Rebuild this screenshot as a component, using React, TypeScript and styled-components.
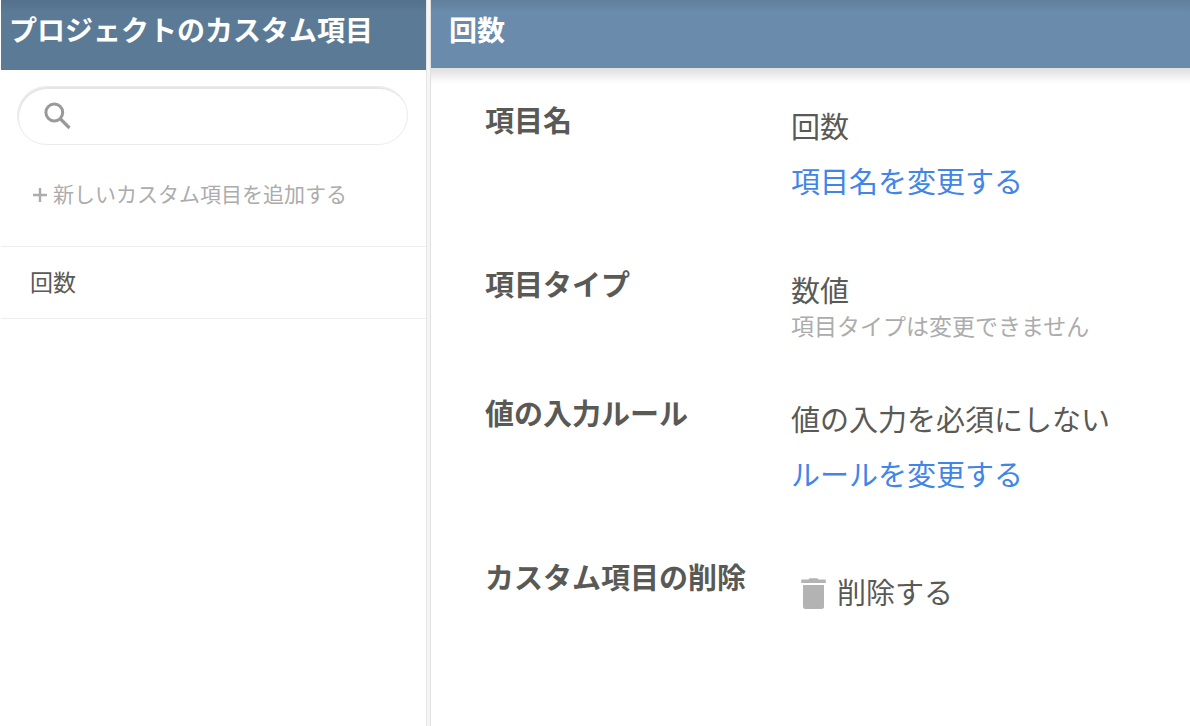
import React, { useState } from "react";
import styled, { createGlobalStyle } from "styled-components";

const GlobalStyle = createGlobalStyle`
  *, *::before, *::after { box-sizing: border-box; }
  body {
    margin: 0;
    background: #fff;
    color: #595955;
    font-family: "Noto Sans CJK JP", "Liberation Sans", sans-serif;
    font-size: 29px;
    line-height: 36px;
  }
  button, input { font: inherit; color: inherit; }
`;

const Page = styled.div`
  display: flex;
  min-height: 100vh;
  padding-left: 1px;
`;

const Sidebar = styled.aside`
  flex: none;
  width: clamp(280px, 36vw, 425px);
`;

const Divider = styled.div`
  flex: none;
  width: 5px;
  background: #f5f5f5;
  border-left: 1px solid #e6e6e6;
  border-right: 1px solid #e0e0e0;
`;

const Detail = styled.main`
  flex: 1;
  min-width: 0;
`;

const SidebarHeader = styled.header`
  height: 70px;
  padding: 11px 8px;
  overflow: hidden;
  white-space: nowrap;
  color: #fff;
  background: linear-gradient(#54708a, #5b7a96 12px);
`;

const DetailHeader = styled.header`
  height: 68px;
  padding: 11px 18px;
  color: #fff;
  background: linear-gradient(#617f9c, #6a8bab 12px);
`;

const HeaderShade = styled.div`
  height: 18px;
  background: linear-gradient(#e0e0e0, #e8e8e8 5px, #fafafa 13px, #fff);
`;

const Title = styled.h1`
  margin: 0;
  font-size: 28px;
  line-height: 36px;
  font-weight: 700;
`;

const SearchBox = styled.label`
  display: flex;
  align-items: center;
  gap: 12px;
  height: 59px;
  margin: 16px 18px 0 16px;
  padding: 0 25px;
  border: 1px solid #ebebeb;
  border-radius: 30px;
  box-shadow: inset 1px 2px 0 #e6e6e6;

  svg { flex: none; }
`;

const SearchInput = styled.input`
  flex: 1;
  min-width: 0;
  padding: 0;
  border: 0;
  outline: 0;
  background: none;
  font-size: 23px;
`;

const AddButton = styled.button`
  display: flex;
  align-items: center;
  gap: 6px;
  width: 100%;
  height: 101px;
  padding: 0 32px 5px;
  border: 0;
  background: none;
  color: #acacac;
  font-size: 21px;
  white-space: nowrap;
  cursor: pointer;
`;

const FieldList = styled.ul`
  margin: 0;
  padding: 0;
  list-style: none;
  border-top: 1px solid #ededed;
`;

const FieldLink = styled.a`
  display: block;
  padding: 16px 29px 19px;
  border-bottom: 1px solid #ededed;
  color: inherit;
  font-size: 23px;
  text-decoration: none;
`;

const Settings = styled.dl`
  display: grid;
  gap: 51px;
  margin: 0;
  padding: 15px 24px 40px 54px;
`;

const Setting = styled.div`
  display: flex;
`;

const Label = styled.dt`
  flex: none;
  width: 306px;
  font-weight: 700;
`;

const Value = styled.dd<{ $action?: boolean }>`
  margin: 0;
  padding-top: ${({ $action }) => ($action ? 14 : 6)}px;
`;

const Text = styled.p`
  margin: 0;
`;

const Hint = styled.p`
  margin: 0;
  color: #acacac;
  font-size: 23px;
`;

const ChangeLink = styled.a`
  display: block;
  margin: 19px 0 16px;
  color: #4285e8;
  text-decoration: none;
`;

const DeleteButton = styled.button`
  display: flex;
  align-items: center;
  gap: 11px;
  padding: 0 0 0 10px;
  border: 0;
  background: none;
  cursor: pointer;
`;

const SearchIcon = () => (
  <svg width="30" height="30" viewBox="0 0 30 30" fill="none" stroke="#999" aria-hidden="true">
    <circle cx="11.300" cy="11.500" r="8.400" strokeWidth="3" />
    <path d="M17.500 18 26.500 27" strokeWidth="3.200" />
  </svg>
);

const PlusIcon = () => (
  <svg width="14" height="18" viewBox="0 -4 14 18" fill="none" stroke="#acacac" strokeWidth="2.4" aria-hidden="true">
    <path d="M7 0v14M0 7h14" />
  </svg>
);

const TrashIcon = () => (
  <svg width="25" height="38" viewBox="0 -6 25 38" fill="#b3b3b3" aria-hidden="true">
    <path d="M1 1.500h6.500Q8 .3 9.500.3h6q1.500 0 2 1.200H24q.8 0 .8.800V5H.2V2.300Q.2 1.500 1 1.500Z" />
    <path d="M2 7h21v21.500q0 2.500-2.500 2.500h-16Q2 31 2 28.500Z" />
  </svg>
);

export default function App() {
  const [query, setQuery] = useState("");
  const fields = ["回数"].filter((name) => name.includes(query));

  return (
    <>
      <GlobalStyle />
      <Page>
        <Sidebar>
          <SidebarHeader>
            <Title>プロジェクトのカスタム項目</Title>
          </SidebarHeader>
          <SearchBox>
            <SearchIcon />
            <SearchInput
              type="text"
              aria-label="検索"
              value={query}
              onChange={(event) => setQuery(event.target.value)}
            />
          </SearchBox>
          <AddButton type="button">
            <PlusIcon />
            新しいカスタム項目を追加する
          </AddButton>
          <FieldList>
            {fields.map((name) => (
              <li key={name}>
                <FieldLink href="#field">{name}</FieldLink>
              </li>
            ))}
          </FieldList>
        </Sidebar>
        <Divider />
        <Detail>
          <DetailHeader>
            <Title as="h2">回数</Title>
          </DetailHeader>
          <HeaderShade />
          <Settings>
            <Setting>
              <Label>項目名</Label>
              <Value>
                <Text>回数</Text>
                <ChangeLink href="#name">項目名を変更する</ChangeLink>
              </Value>
            </Setting>
            <Setting>
              <Label>項目タイプ</Label>
              <Value>
                <Text>数値</Text>
                <Hint>項目タイプは変更できません</Hint>
              </Value>
            </Setting>
            <Setting>
              <Label>値の入力ルール</Label>
              <Value>
                <Text>値の入力を必須にしない</Text>
                <ChangeLink href="#rule">ルールを変更する</ChangeLink>
              </Value>
            </Setting>
            <Setting>
              <Label>カスタム項目の削除</Label>
              <Value $action>
                <DeleteButton type="button">
                  <TrashIcon />
                  削除する
                </DeleteButton>
              </Value>
            </Setting>
          </Settings>
        </Detail>
      </Page>
    </>
  );
}
